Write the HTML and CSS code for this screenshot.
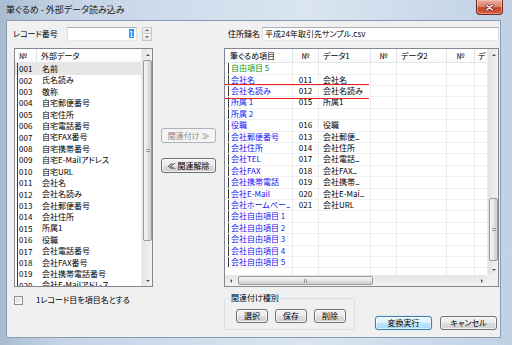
FILE: index.html
```html
<!DOCTYPE html>
<html lang="ja">
<head>
<meta charset="utf-8">
<title>外部データ読み込み</title>
<link rel="stylesheet" href="styles.css">
</head>
<body>
<div class="window">
  <div class="titlebar">
    <span class="title">筆ぐるめ - 外部データ読み込み</span>
    <div class="close">
      <svg width="9" height="7" viewBox="0 0 9 7"><path d="M1.5 1 L7.5 6 M7.5 1 L1.5 6" stroke="#5a1a10" stroke-width="2.6" stroke-linecap="round"/><path d="M1.5 1 L7.5 6 M7.5 1 L1.5 6" stroke="#ffffff" stroke-width="1.4" stroke-linecap="round"/></svg>
    </div>
  </div>
  <div class="client">
    <div class="top-left">
      <span class="lbl lbl-rec">レコード番号</span>
      <div class="textbox rec"><span class="sel">1</span></div>
      <div class="spin">
        <div class="spin-btn"><span class="tri tri-up"></span></div>
        <div class="spin-btn"><span class="tri tri-down"></span></div>
      </div>
    </div>
    <div class="spacer"></div>
    <div class="top-right">
      <span class="lbl lbl-file">住所録名</span>
      <div class="textbox file">平成24年取引先サンプル.csv</div>
    </div>

    <div class="listbox">
      <div class="lb-content">
        <div class="lb-head">
          <div class="lh lh-no">№</div>
          <div class="lh lh-data">外部データ</div>
        </div>
        <div class="lrow selected"><span class="no">001</span><span class="dt">名前</span></div>
        <div class="lrow"><span class="no">002</span><span class="dt">氏名読み</span></div>
        <div class="lrow"><span class="no">003</span><span class="dt">敬称</span></div>
        <div class="lrow"><span class="no">004</span><span class="dt">自宅郵便番号</span></div>
        <div class="lrow"><span class="no">005</span><span class="dt">自宅住所</span></div>
        <div class="lrow"><span class="no">006</span><span class="dt">自宅電話番号</span></div>
        <div class="lrow"><span class="no">007</span><span class="dt">自宅FAX番号</span></div>
        <div class="lrow"><span class="no">008</span><span class="dt">自宅携帯番号</span></div>
        <div class="lrow"><span class="no">009</span><span class="dt">自宅E-Mailアドレス</span></div>
        <div class="lrow"><span class="no">010</span><span class="dt">自宅URL</span></div>
        <div class="lrow"><span class="no">011</span><span class="dt">会社名</span></div>
        <div class="lrow"><span class="no">012</span><span class="dt">会社名読み</span></div>
        <div class="lrow"><span class="no">013</span><span class="dt">会社郵便番号</span></div>
        <div class="lrow"><span class="no">014</span><span class="dt">会社住所</span></div>
        <div class="lrow"><span class="no">015</span><span class="dt">所属1</span></div>
        <div class="lrow"><span class="no">016</span><span class="dt">役職</span></div>
        <div class="lrow"><span class="no">017</span><span class="dt">会社電話番号</span></div>
        <div class="lrow"><span class="no">018</span><span class="dt">会社FAX番号</span></div>
        <div class="lrow"><span class="no">019</span><span class="dt">会社携帯電話番号</span></div>
        <div class="lrow"><span class="no">020</span><span class="dt">会社E-Mailアドレス</span></div>
      </div>
      <div class="vscroll lvs">
        <div class="sarrow"><span class="tri tri-up dark"></span></div>
        <div class="thumb v lthumb"></div>
        <div class="strack"></div>
        <div class="sarrow"><span class="tri tri-down dark"></span></div>
      </div>
    </div>

    <div class="mid">
      <div class="btn disabled mid-btn">関連付け ≫</div>
      <div class="btn mid-btn">≪ 関連解除</div>
    </div>

    <div class="gridbox">
      <div class="grid-main">
        <div class="grid-content">
          <div class="g-head">
            <div class="gh w1 pl5">筆ぐるめ項目</div>
            <div class="gh w2 ctr">№</div>
            <div class="gh w3 pl4">データ1</div>
            <div class="gh w4 ctr">№</div>
            <div class="gh w5 pl4">データ2</div>
            <div class="gh w6 ctr">№</div>
            <div class="gh w7 pl3">デ</div>
          </div>
          <div class="grow"><span class="gc c1 green">自由項目 5</span><span class="gc c2"></span><span class="gc c3"></span><span class="gc c4"></span><span class="gc c5"></span><span class="gc c6"></span><span class="gc c7"></span></div>
          <div class="grow"><span class="gc c1">会社名</span><span class="gc c2">011</span><span class="gc c3">会社名</span><span class="gc c4"></span><span class="gc c5"></span><span class="gc c6"></span><span class="gc c7"></span></div>
          <div class="grow"><span class="gc c1">会社名読み</span><span class="gc c2">012</span><span class="gc c3">会社名読み</span><span class="gc c4"></span><span class="gc c5"></span><span class="gc c6"></span><span class="gc c7"></span></div>
          <div class="grow"><span class="gc c1">所属 1</span><span class="gc c2">015</span><span class="gc c3">所属1</span><span class="gc c4"></span><span class="gc c5"></span><span class="gc c6"></span><span class="gc c7"></span></div>
          <div class="grow"><span class="gc c1">所属 2</span><span class="gc c2"></span><span class="gc c3"></span><span class="gc c4"></span><span class="gc c5"></span><span class="gc c6"></span><span class="gc c7"></span></div>
          <div class="grow"><span class="gc c1">役職</span><span class="gc c2">016</span><span class="gc c3">役職</span><span class="gc c4"></span><span class="gc c5"></span><span class="gc c6"></span><span class="gc c7"></span></div>
          <div class="grow"><span class="gc c1">会社郵便番号</span><span class="gc c2">013</span><span class="gc c3">会社郵便<span class="ell">...</span></span><span class="gc c4"></span><span class="gc c5"></span><span class="gc c6"></span><span class="gc c7"></span></div>
          <div class="grow"><span class="gc c1">会社住所</span><span class="gc c2">014</span><span class="gc c3">会社住所</span><span class="gc c4"></span><span class="gc c5"></span><span class="gc c6"></span><span class="gc c7"></span></div>
          <div class="grow"><span class="gc c1">会社TEL</span><span class="gc c2">017</span><span class="gc c3">会社電話<span class="ell">...</span></span><span class="gc c4"></span><span class="gc c5"></span><span class="gc c6"></span><span class="gc c7"></span></div>
          <div class="grow"><span class="gc c1">会社FAX</span><span class="gc c2">018</span><span class="gc c3">会社FAX<span class="ell">...</span></span><span class="gc c4"></span><span class="gc c5"></span><span class="gc c6"></span><span class="gc c7"></span></div>
          <div class="grow"><span class="gc c1">会社携帯電話</span><span class="gc c2">019</span><span class="gc c3">会社携帯<span class="ell">...</span></span><span class="gc c4"></span><span class="gc c5"></span><span class="gc c6"></span><span class="gc c7"></span></div>
          <div class="grow"><span class="gc c1">会社E-Mail</span><span class="gc c2">020</span><span class="gc c3">会社E-Mai<span class="ell">...</span></span><span class="gc c4"></span><span class="gc c5"></span><span class="gc c6"></span><span class="gc c7"></span></div>
          <div class="grow"><span class="gc c1">会社ホームペー<span class="ell">...</span></span><span class="gc c2">021</span><span class="gc c3">会社URL</span><span class="gc c4"></span><span class="gc c5"></span><span class="gc c6"></span><span class="gc c7"></span></div>
          <div class="grow"><span class="gc c1">会社自由項目 1</span><span class="gc c2"></span><span class="gc c3"></span><span class="gc c4"></span><span class="gc c5"></span><span class="gc c6"></span><span class="gc c7"></span></div>
          <div class="grow"><span class="gc c1">会社自由項目 2</span><span class="gc c2"></span><span class="gc c3"></span><span class="gc c4"></span><span class="gc c5"></span><span class="gc c6"></span><span class="gc c7"></span></div>
          <div class="grow"><span class="gc c1">会社自由項目 3</span><span class="gc c2"></span><span class="gc c3"></span><span class="gc c4"></span><span class="gc c5"></span><span class="gc c6"></span><span class="gc c7"></span></div>
          <div class="grow"><span class="gc c1">会社自由項目 4</span><span class="gc c2"></span><span class="gc c3"></span><span class="gc c4"></span><span class="gc c5"></span><span class="gc c6"></span><span class="gc c7"></span></div>
          <div class="grow"><span class="gc c1">会社自由項目 5</span><span class="gc c2"></span><span class="gc c3"></span><span class="gc c4"></span><span class="gc c5"></span><span class="gc c6"></span><span class="gc c7"></span></div>
          <div class="grow"><span class="gc c1 nobar"></span><span class="gc c2"></span><span class="gc c3"></span><span class="gc c4"></span><span class="gc c5"></span><span class="gc c6"></span><span class="gc c7"></span></div>
          <div class="redmark"></div>
        </div>
        <div class="vscroll rvs">
          <div class="sarrow"><span class="tri tri-up dark"></span></div>
          <div class="strack rtop"></div>
          <div class="thumb v rthumb"></div>
          <div class="strack"></div>
          <div class="sarrow"><span class="tri tri-down dark"></span></div>
        </div>
      </div>
      <div class="hscroll">
        <div class="sarrow h"><span class="tri tri-left dark"></span></div>
        <div class="thumb hz"></div>
        <div class="strack h"></div>
        <div class="sarrow h"><span class="tri tri-right dark"></span></div>
        <div class="corner"></div>
      </div>
    </div>

    <div class="bottom-left">
      <div class="checkbox"></div>
      <span class="chk-label">1レコード目を項目名とする</span>
    </div>
    <div class="spacer"></div>
    <div class="bottom-right">
      <fieldset class="group">
        <legend>関連付け種別</legend>
        <div class="group-btns">
          <div class="btn small">選択</div>
          <div class="btn small">保存</div>
          <div class="btn small">削除</div>
        </div>
      </fieldset>
      <div class="btn big default">変換実行</div>
      <div class="btn big">キャンセル</div>
    </div>
  </div>
</div>
</body>
</html>
```
FILE: styles.css
```css
* { box-sizing: border-box; }
html, body { margin: 0; padding: 0; }
body {
  width: 512px; height: 345px; overflow: hidden;
  font-family: "Noto Sans CJK JP", "Noto Sans", sans-serif;
  font-size: 8px;
  font-feature-settings: "palt";
  color: #000;
  background: #c5d5e7;
}
.window {
  width: 512px; height: 345px;
  display: flex; flex-direction: column;
  background: linear-gradient(90deg, #a9bccf 0%, #c4d4e6 12%, #d3e0ee 45%, #dae5f1 60%, #c9d9ea 85%, #c1d2e5 100%);
}
.titlebar {
  height: 20px; flex: none;
  display: flex; align-items: flex-start;
  padding-left: 6px;
}
.title {
  font-size: 9px; line-height: 12px; margin-top: 4px;
  color: #1a1a1a;
}
.close {
  margin-left: auto; margin-right: 9px;
  width: 27px; height: 15px;
  border: 1px solid #6b2a20; border-top: none;
  border-radius: 0 0 4px 4px;
  background: linear-gradient(#e9aa99 0%, #dc8874 45%, #c7442b 55%, #d45c3f 100%);
  box-shadow: inset 0 0 0 1px rgba(255,220,210,.45);
  display: flex; align-items: center; justify-content: center;
}
.client {
  margin-left: 6px;
  width: 495px; height: 318px;
  border: 1px solid #8a9cb2;
  background: #f0f0f0;
  padding: 5px 1px 0 7px;
  display: grid;
  grid-template-columns: 139px 71px 275px;
  grid-template-rows: 22px 239px 1fr;
}
.top-left, .top-right { display: flex; align-items: center; height: 15px; }
.lbl { line-height: 10px; white-space: nowrap; }
.lbl-rec { width: 54px; margin-left: -1px; }
.top-right { padding-left: 4px; }
.lbl-file { width: 34px; }
.textbox {
  height: 14px; background: #fff;
  border: 1px solid #dbdfe6; border-top-color: #abadb3; border-bottom-color: #e3e9ef;
  line-height: 12px; white-space: nowrap; overflow: hidden;
}
.rec { width: 70px; display: flex; justify-content: flex-end; align-items: center; padding-right: 2px; }
.sel { background: #3399ff; color: #fff; line-height: 9px; padding: 0 0.5px; }
.file { width: 237px; padding-left: 2px; }
.spin { margin-left: 5px; width: 10px; height: 14px; display: flex; flex-direction: column; }
.spin-btn {
  flex: 1; border: 1px solid #c3c7cc; background: linear-gradient(#f7f7f7, #e7e9ec);
  display: flex; align-items: center; justify-content: center;
}
.spin-btn + .spin-btn { border-top: none; }
.tri { width: 0; height: 0; border-style: solid; display: block; }
.tri-up { border-width: 0 2px 2px 2px; border-color: transparent transparent #56687f transparent; }
.tri-down { border-width: 2px 2px 0 2px; border-color: #56687f transparent transparent transparent; }
.tri-left { border-width: 2px 2px 2px 0; border-color: transparent #56687f transparent transparent; }
.tri-right { border-width: 2px 0 2px 2px; border-color: transparent transparent transparent #56687f; }
.tri.dark.tri-up { border-bottom-color: #555; }
.tri.dark.tri-down { border-top-color: #555; }
.tri.dark.tri-left { border-right-color: #555; }
.tri.dark.tri-right { border-left-color: #555; }

/* list box */
.listbox {
  width: 139px; height: 239px;
  border: 1px solid #828790; background: #fff;
  display: flex;
}
.lb-content { flex: 1; overflow: hidden; }
.lb-head { height: 14.3px; display: flex; border-bottom: 1px solid #e5e5e5; background: linear-gradient(#fff, #fafbfc); }
.lh { line-height: 13px; white-space: nowrap; }
.lh-no { width: 22px; padding-left: 4px; border-right: 1px solid #e3e3e3; }
.lh-data { flex: 1; padding-left: 4px; }
.lrow { height: 11.4px; display: flex; align-items: center; white-space: nowrap; line-height: 10px; }
.lrow.selected { background: #e6e6e6; }
.lrow .no { width: 20px; margin-left: 2px; border-left: 1px solid #3a3a3a; padding-left: 1px; height: 11.4px; line-height: 11.4px; }
.lrow .dt { padding-left: 5px; }

/* scrollbars */
.vscroll { width: 11px; display: flex; flex-direction: column; background: linear-gradient(90deg, #e3e3e3, #f3f3f3); border-left: 1px solid #ededed; }
.sarrow { width: 11px; height: 11px; flex: none; display: flex; align-items: center; justify-content: center; }
.strack { flex: 1; }
.thumb {
  border: 1px solid #9a9a9a; border-radius: 2px;
  display: flex; align-items: center; justify-content: center;
}
.thumb.v { background: linear-gradient(90deg, #f5f5f5 0%, #e9e9e9 50%, #dbdbdb 51%, #d2d2d2 100%); margin: 0 0 0 1px; width: 9px; }
.thumb::after { content: ""; width: 4px; height: 4px; background: repeating-linear-gradient(#888 0 1px, transparent 1px 2px); opacity: .8; }
.lthumb { height: 181px; flex: none; margin-top: 1px; }
.rtop { flex: none; height: 138px; }
.rthumb { height: 63px; flex: none; }
.hscroll { height: 11px; display: flex; background: linear-gradient(#e3e3e3, #f3f3f3); }
.sarrow.h { height: 11px; }
.strack.h { flex: 1; }
.thumb.hz { width: 135px; margin-left: 2px; height: 9px; margin-top: 1px; background: linear-gradient(#f5f5f5 0%, #e9e9e9 50%, #dbdbdb 51%, #d2d2d2 100%); }
.thumb.hz::after { width: 4px; height: 4px; background: repeating-linear-gradient(90deg, #888 0 1px, transparent 1px 2px); }
.corner { width: 11px; background: #f0f0f0; }

/* middle */
.mid { display: flex; flex-direction: column; align-items: center; padding-top: 80px; gap: 15px; }
.btn {
  border: 1px solid #707070; border-radius: 3px;
  background: linear-gradient(#f2f2f2 0%, #ebebeb 50%, #dddddd 51%, #cfcfcf 100%);
  box-shadow: inset 0 0 0 1px rgba(255,255,255,.7);
  display: flex; align-items: center; justify-content: center;
  white-space: nowrap; line-height: 10px; color: #000;
}
.mid-btn { width: 55px; height: 15px; }
.btn.disabled { border-color: #adb2b5; background: #f4f4f4; color: #8a8a8a; box-shadow: none; }

/* grid */
.gridbox {
  width: 275px; height: 239px;
  border: 1px solid #828790; background: #fff;
  display: flex; flex-direction: column;
}
.grid-main { height: 226px; display: flex; }
.grid-content { flex: 1; overflow: hidden; position: relative; }
.g-head { height: 14.3px; display: flex; border-bottom: 1px solid #e5e5e5; background: linear-gradient(#fff, #fafbfc); }
.gh { line-height: 13px; white-space: nowrap; overflow: hidden; border-right: 1px solid #e3e3e3; flex: none; }
.w1 { width: 68px; } .w2 { width: 26px; } .w3 { width: 52px; } .w4 { width: 26px; } .w5 { width: 50px; } .w6 { width: 28px; } .w7 { flex: 1; border-right: none; }
.pl5 { padding-left: 5px; } .pl4 { padding-left: 4px; } .pl3 { padding-left: 3px; }
.ctr { text-align: center; }
.grow { height: 11.4px; display: flex; border-bottom: 1px solid #efefef; }
.gc { height: 100%; line-height: 10.4px; white-space: nowrap; overflow: hidden; border-right: 1px solid #ececec; flex: none; }
.gc.c1 { width: 65px; margin-left: 3px; border-left: 1px solid #3a3a3a; padding-left: 2px; color: #1414f2; }
.gc.c1.green { color: #0c9a14; }
.gc.c1.nobar { border-left-color: transparent; }
.gc.c2 { width: 26px; text-align: center; }
.gc.c3 { width: 52px; padding-left: 4px; }
.gc.c4 { width: 26px; }
.gc.c5 { width: 50px; }
.gc.c6 { width: 28px; }
.gc.c7 { flex: 1; border-right: none; }
.ell { letter-spacing: -1px; }
.redmark {
  position: absolute; left: 0; top: 35px;
  width: 144px; height: 15px;
  border-top: 1.5px solid #ee1c1c; border-bottom: 1.5px solid #ee1c1c;
}

/* bottom */
.bottom-left { display: flex; align-items: center; height: 18px; margin-top: 4px; }
.checkbox {
  width: 9px; height: 9px; border: 1px solid #8e8f8f;
  background: linear-gradient(135deg, #dcdcdc, #f8f8f8);
  box-shadow: inset 0 0 0 1px #f4f4f4;
}
.chk-label { margin-left: 13px; line-height: 10px; white-space: nowrap; }
.bottom-right { display: flex; align-items: flex-start; }
.group {
  margin: 6px 0 0 0; padding: 0 0 6px 5px;
  width: 131px; min-width: 0;
  border: 1px solid #d5dfe5; border-radius: 3px;
}
.group legend { padding: 0 1px; line-height: 10px; font-size: 8px; margin-left: 0; }
.group-btns { display: flex; gap: 7px; margin-top: 6px; margin-left: 6px; }
.btn.small { width: 32px; height: 14px; }
.btn.big { width: 57px; height: 14px; margin-top: 29px; }
.btn.default { margin-left: 20px; border-color: #3c7fb1; background: linear-gradient(#eaf6fd 0%, #d9f0fc 50%, #bee6fd 51%, #a7d9f5 100%); box-shadow: inset 0 0 0 1px rgba(255,255,255,.6), 0 0 1px #5aa9e6; }
.btn.default + .btn.big { margin-left: 8px; }
```
